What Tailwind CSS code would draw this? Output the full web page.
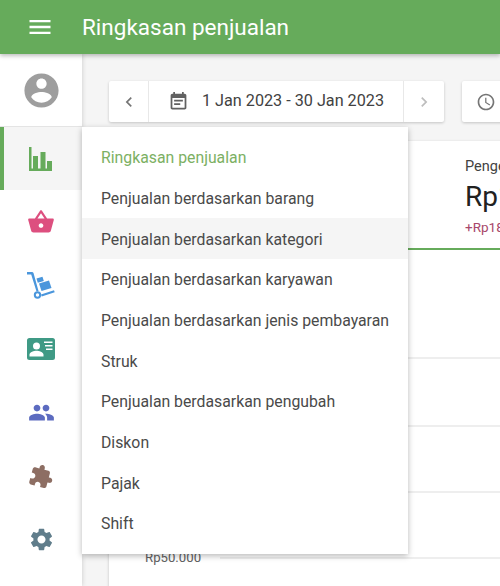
<!DOCTYPE html>
<html lang="en">
<head>
  <meta charset="UTF-8" />
  <title>Ringkasan penjualan</title>
  <script src="https://cdn.jsdelivr.net/npm/@tailwindcss/browser@4"></script>
</head>
<body class="m-0 font-['Roboto',sans-serif]">
  <div class="w-[500px] h-[586px] overflow-hidden flex flex-col bg-[#f5f5f5]">

    <!-- Header -->
    <header class="relative z-30 h-[54px] shrink-0 flex items-center bg-[#66ab5b] text-white shadow-[0_2px_4px_rgba(0,0,0,0.25)]">
      <svg class="w-[28px] h-[28px] ml-[26px]" viewBox="0 0 24 24" fill="currentColor"><path d="M3 18h18v-2H3v2zm0-5h18v-2H3v2zm0-7v2h18V6H3z"/></svg>
      <div class="ml-[28px] text-[22.5px] font-normal leading-none">Ringkasan penjualan</div>
    </header>

    <div class="flex flex-1 min-h-0">
      <!-- Sidebar -->
      <aside class="relative z-20 w-[82px] shrink-0 bg-white flex flex-col shadow-[0_0_5px_rgba(0,0,0,0.18)]">
        <div class="h-[73px] shrink-0 flex items-center justify-center border-b border-[#e4e4e4]">
          <svg class="w-[41px] h-[41px] text-[#9e9e9e]" viewBox="0 0 24 24" fill="currentColor"><path d="M12 2C6.48 2 2 6.48 2 12s4.48 10 10 10 10-4.48 10-10S17.52 2 12 2zm0 3c1.66 0 3 1.34 3 3s-1.34 3-3 3-3-1.34-3-3 1.34-3 3-3zm0 14.2c-2.5 0-4.71-1.28-6-3.22.03-1.99 4-3.08 6-3.08 1.99 0 5.97 1.09 6 3.08-1.29 1.94-3.5 3.22-6 3.22z"/></svg>
        </div>
        <div class="h-[63px] shrink-0 flex items-center justify-center bg-[#f5f5f5] border-l-[4px] border-[#66ab5b] pr-[5px]">
          <svg class="w-[23px] h-[24px] text-[#66ab5b]" viewBox="0 0 23 24" fill="currentColor"><path d="M0 0h2.500v24H0zM2.500 21.500H23V24H2.500zM4 9h5v12.500H4zM11.500 5h5v16.500h-5zM18 14h5v7.500h-5z"/></svg>
        </div>
        <div class="h-[64px] shrink-0 flex items-center justify-center">
          <svg class="w-[28px] h-[28px] text-[#dd4f7f]" viewBox="0 0 24 24" fill="currentColor"><path d="M17.21 9l-4.38-6.56c-.19-.28-.51-.42-.83-.42-.32 0-.64.14-.83.43L6.79 9H2c-.55 0-1 .45-1 1 0 .09.01.18.04.27l2.54 9.27c.23.84 1 1.46 1.92 1.46h13c.92 0 1.69-.62 1.93-1.46l2.54-9.27L23 10c0-.55-.45-1-1-1h-4.79zM9 9l3-4.4L15 9H9zm3 8c-1.1 0-2-.9-2-2s.9-2 2-2 2 .9 2 2-.9 2-2 2z"/></svg>
        </div>
        <div class="h-[63px] shrink-0 flex items-center justify-center">
          <svg class="w-[28px] h-[28px] text-[#4a96dc]" viewBox="0 0 28 28" fill="currentColor">
            <path d="M0 0h5c.7 0 1.200.4 1.500 1L11.500 19l-2 .6L4.200 2.400H0z"/>
            <circle cx="10.500" cy="23" r="2.700" fill="none" stroke="currentColor" stroke-width="2"/>
            <path d="M14 22.500l13-4.200.7 2-13 4.200z"/>
            <path d="M9.500 6.500l6-1.800 1.300 4.200-6 1.800z"/>
            <path d="M12 11.500l10-3 2.500 7.500-10 3z"/>
          </svg>
        </div>
        <div class="h-[64px] shrink-0 flex items-center justify-center">
          <svg class="w-[28px] h-[22px] text-[#3f9a85]" viewBox="0 0 28 22" fill="currentColor">
            <path fill-rule="evenodd" d="M2.500 0h23A2.500 2.500 0 0 1 28 2.500v17a2.500 2.500 0 0 1-2.500 2.500h-23A2.500 2.500 0 0 1 0 19.500v-17A2.500 2.500 0 0 1 2.500 0zM9.500 4.500a3.500 3.500 0 1 0 0 7 3.500 3.500 0 0 0 0-7zM2.500 18.500h14v-2c0-2.500-4.500-3.800-7-3.800s-7 1.300-7 3.800zM17 3.500v1.600h8.500V3.500zM18 7v1.600h7.500V7zM19 10.500v1.600h6.500v-1.600z"/>
          </svg>
        </div>
        <div class="h-[63px] shrink-0 flex items-center justify-center">
          <svg class="w-[27px] h-[27px] text-[#5c6bc0]" viewBox="0 0 24 24" fill="currentColor"><path d="M16 11c1.660 0 2.990-1.340 2.990-3S17.660 5 16 5c-1.660 0-3 1.340-3 3s1.340 3 3 3zm-8 0c1.660 0 2.990-1.340 2.990-3S9.660 5 8 5C6.340 5 5 6.340 5 8s1.340 3 3 3zm0 2c-2.330 0-7 1.170-7 3.500V19h14v-2.500c0-2.330-4.670-3.500-7-3.500zm8 0c-.29 0-.62.02-.97.05 1.160.84 1.970 1.970 1.970 3.450V19h6v-2.500c0-2.330-4.670-3.500-7-3.500z"/></svg>
        </div>
        <div class="h-[64px] shrink-0 flex items-center justify-center">
          <svg class="w-[25px] h-[25px] text-[#8d6e63] rotate-[15deg]" viewBox="0 0 24 24" fill="currentColor"><path d="M20.500 11H19V7c0-1.100-.9-2-2-2h-4V3.500C13 2.120 11.880 1 10.500 1S8 2.120 8 3.500V5H4c-1.100 0-1.990.9-1.990 2v3.800H3.500c1.490 0 2.700 1.210 2.700 2.700s-1.210 2.700-2.700 2.700H2V20c0 1.100.9 2 2 2h3.800v-1.500c0-1.490 1.210-2.700 2.700-2.700 1.490 0 2.700 1.210 2.700 2.700V22H17c1.100 0 2-.9 2-2v-4h1.500c1.380 0 2.500-1.120 2.500-2.500S21.880 11 20.500 11z"/></svg>
        </div>
        <div class="h-[63px] shrink-0 flex items-center justify-center">
          <svg class="w-[27px] h-[27px] text-[#607d8b]" viewBox="0 0 24 24" fill="currentColor"><path d="M19.140 12.940c.04-.3.06-.61.06-.94 0-.32-.02-.64-.07-.94l2.030-1.580c.18-.14.23-.41.12-.61l-1.920-3.320c-.12-.22-.37-.29-.59-.22l-2.390.96c-.5-.38-1.030-.7-1.620-.94l-.36-2.540c-.04-.24-.24-.41-.48-.41h-3.840c-.24 0-.43.17-.47.41l-.36 2.540c-.59.24-1.130.57-1.620.94l-2.390-.96c-.22-.08-.47 0-.59.22L2.740 8.870c-.12.21-.08.47.12.61l2.030 1.580c-.05.3-.09.63-.09.94s.02.64.07.94l-2.030 1.580c-.18.14-.23.41-.12.61l1.920 3.320c.12.22.37.29.59.22l2.390-.96c.5.38 1.030.7 1.620.94l.36 2.540c.05.24.24.41.48.41h3.840c.24 0 .44-.17.47-.41l.36-2.540c.59-.24 1.130-.56 1.620-.94l2.390.96c.22.08.47 0 .59-.22l1.920-3.320c.12-.22.07-.47-.12-.61l-2.010-1.580zM12 15.600c-1.980 0-3.600-1.620-3.600-3.600s1.620-3.600 3.600-3.600 3.600 1.620 3.600 3.600-1.620 3.600-3.600 3.600z"/></svg>
        </div>
      </aside>

      <!-- Main -->
      <main class="relative flex-1 min-w-0 pl-[27px] pt-[27px]">
        <div class="flex gap-[18px]">
          <div class="h-[41px] w-[335px] shrink-0 flex items-center bg-white rounded-[2px] shadow-[0_1px_3px_rgba(0,0,0,0.2)]">
            <div class="w-[40px] h-full flex items-center justify-center border-r border-[#e8e8e8]">
              <svg class="w-5 h-5 text-[#757575]" viewBox="0 0 24 24" fill="currentColor"><path d="M15.410 7.410L14 6l-6 6 6 6 1.410-1.410L10.830 12z"/></svg>
            </div>
            <div class="flex-1 flex items-center justify-center gap-[13px] text-[16.2px] text-[#424242]">
              <svg class="w-[21px] h-[21px] text-[#616161]" viewBox="0 0 24 24" fill="currentColor"><path d="M17 10H7v2h10v-2zm2-7h-1V1h-2v2H8V1H6v2H5c-1.110 0-1.990.9-1.990 2L3 19c0 1.100.89 2 2 2h14c1.100 0 2-.9 2-2V5c0-1.100-.9-2-2-2zm0 16H5V8h14v11zm-5-5H7v2h7v-2z"/></svg>
              <span>1 Jan 2023 - 30 Jan 2023</span>
            </div>
            <div class="w-[41px] h-full flex items-center justify-center border-l border-[#e8e8e8]">
              <svg class="w-5 h-5 text-[#bdbdbd]" viewBox="0 0 24 24" fill="currentColor"><path d="M10 6L8.590 7.410 13.170 12l-4.580 4.590L10 18l6-6z"/></svg>
            </div>
          </div>
          <div class="h-[41px] w-[120px] shrink-0 flex items-center pl-[14px] bg-white rounded-[2px] shadow-[0_1px_3px_rgba(0,0,0,0.2)]">
            <svg class="w-[20px] h-[20px] text-[#757575]" viewBox="0 0 24 24" fill="currentColor"><path d="M11.990 2C6.470 2 2 6.480 2 12s4.470 10 9.990 10C17.520 22 22 17.520 22 12S17.520 2 11.990 2zM12 20c-4.420 0-8-3.580-8-8s3.580-8 8-8 8 3.580 8 8-3.580 8-8 8zm.5-13H11v6l5.250 3.150.75-1.230-4.500-2.670z"/></svg>
          </div>
        </div>

        <!-- Report card -->
        <section class="mt-[19px] w-[500px] h-[480px] bg-white shadow-[0_1px_3px_rgba(0,0,0,0.2)]">
          <div class="h-[109px] pl-[356px] pt-[17px] border-b-2 border-[#66ab5b] whitespace-nowrap">
            <div class="text-[14.5px] leading-[18px] text-[#424242]">Pengembalian</div>
            <div class="text-[28px] leading-[36px] mt-[3px] text-[#212121]">Rp180.000</div>
            <div class="text-[13.5px] leading-[14px] mt-[5px] text-[#a8476a]">+Rp18.000</div>
          </div>
          <div class="h-[109px] border-b-2 border-[#eeeeee]"></div>
          <div class="h-[68px] border-b-2 border-[#eeeeee]"></div>
          <div class="h-[66px] border-b-2 border-[#eeeeee]"></div>
          <div class="h-[66px] relative">
            <div class="absolute left-[111px] right-0 bottom-0 border-b-2 border-[#eeeeee]"></div>
            <div class="absolute left-[36px] bottom-[-7px] text-[13.2px] leading-[16px] text-[#616161]">Rp50.000</div>
          </div>
        </section>

        <!-- Dropdown menu -->
        <nav class="absolute z-[25] left-0 top-[73px] w-[326px] h-[427px] pt-[10px] bg-white shadow-[0_2px_6px_rgba(0,0,0,0.28)] text-[15.8px] text-[#4a4a4a] whitespace-nowrap">
          <div class="h-[40.7px] flex items-center pl-[19px] pt-[1.5px] text-[#7cb063]">Ringkasan penjualan</div>
          <div class="h-[40.7px] flex items-center pl-[19px] pt-[1.5px]">Penjualan berdasarkan barang</div>
          <div class="h-[40.7px] flex items-center pl-[19px] pt-[1.5px] bg-[#f5f5f5]">Penjualan berdasarkan kategori</div>
          <div class="h-[40.7px] flex items-center pl-[19px] pt-[1.5px]">Penjualan berdasarkan karyawan</div>
          <div class="h-[40.7px] flex items-center pl-[19px] pt-[1.5px]">Penjualan berdasarkan jenis pembayaran</div>
          <div class="h-[40.7px] flex items-center pl-[19px] pt-[1.5px]">Struk</div>
          <div class="h-[40.7px] flex items-center pl-[19px] pt-[1.5px]">Penjualan berdasarkan pengubah</div>
          <div class="h-[40.7px] flex items-center pl-[19px] pt-[1.5px]">Diskon</div>
          <div class="h-[40.7px] flex items-center pl-[19px] pt-[1.5px]">Pajak</div>
          <div class="h-[40.7px] flex items-center pl-[19px] pt-[1.5px]">Shift</div>
        </nav>
      </main>
    </div>
  </div>
</body>
</html>
